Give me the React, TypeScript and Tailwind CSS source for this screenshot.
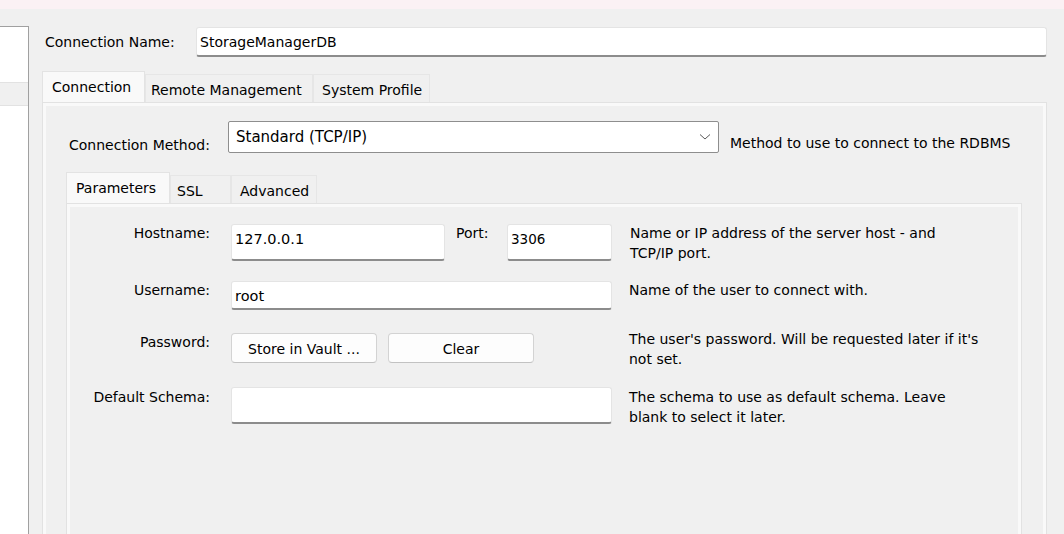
import React from "react";

function TextBox({ value, className = "", textClass = "" }: { value?: string; className?: string; textClass?: string }) {
  return (
    <div
      className={`bg-white border border-[#e4e4e4] border-b-2 border-b-[#8c8c8c] rounded-[3px] pl-[3px] ${className}`}
    >
      <span className={textClass}>{value}</span>
    </div>
  );
}

function Tab({ label, active, className = "" }: { label: string; active?: boolean; className?: string }) {
  return (
    <div
      className={
        active
          ? `h-[31px] bg-[#f9f9f9] border border-b-0 border-[#e3e3e3] flex items-center ${className}`
          : `h-[28px] bg-[#f0f0f0] border border-b-0 border-[#e6e6e6] flex items-center ${className}`
      }
    >
      {label}
    </div>
  );
}

export default function App() {
  return (
    <div className="w-[1064px] h-[534px] overflow-hidden bg-[#f0f0f0] flex flex-col font-['DejaVu_Sans',sans-serif] text-[14px] leading-[20px] text-black">
      <div className="h-[9px] shrink-0 bg-[#fbf1f4]" />

      <div className="flex h-[540px] shrink-0 mt-[17px]">
        {/* connection list (cut off) */}
        <div className="w-[29px] shrink-0 bg-white border-t border-r border-[#a0a0a0] flex flex-col">
          <div className="h-[55px]" />
          <div className="h-[24px] bg-[#f0f0f0] border-y border-[#e2e2e2]" />
        </div>

        <div className="ml-[13px] w-[1005px] flex flex-col">
          {/* name row */}
          <div className="flex items-center mt-[1px] h-[30px]">
            <div className="w-[154px] pl-[3px]">Connection Name:</div>
            <TextBox value="StorageManagerDB" className="flex-1 h-[30px] flex items-center" />
          </div>

          {/* outer tabs */}
          <div className="flex items-end mt-[14px]">
            <Tab label="Connection" active className="w-[103px] pl-[9px]" />
            <Tab label="Remote Management" className="w-[168px] pl-[5px] pt-[2px]" />
            <Tab label="System Profile" className="w-[117px] pl-[8px] pt-[2px]" />
          </div>

          <div className="flex-1 border border-[#e2e2e2] bg-[#f9f9f9] p-[3px] pb-0 flex flex-col min-h-0">
            <div className="flex-1 bg-[#f0f0f0] flex flex-col pt-[15px] min-h-0">
              {/* connection method */}
              <div className="flex items-start h-[32px] ml-[23px]">
                <div className="w-[159px] mt-[14px]">Connection Method:</div>
                <div className="w-[491px] h-[32px] bg-white border border-[#8e8e8e] rounded-[2px] flex items-center justify-between pl-[7px] pr-[7px]">
                  <span className="text-[15px] -mt-[1px]">Standard (TCP/IP)</span>
                  <svg width="12" height="8" viewBox="0 0 12 8" className="-mt-[1px]">
                    <path d="M1 1.5 L6 6 L11 1.5" fill="none" stroke="#5a5a5a" strokeWidth="1" />
                  </svg>
                </div>
                <div className="ml-[11px] mt-[12px]">Method to use to connect to the RDBMS</div>
              </div>

              {/* inner tabs */}
              <div className="flex items-end mt-[19px] ml-[20px]">
                <Tab label="Parameters" active className="w-[104px] pl-[9px]" />
                <Tab label="SSL" className="w-[61px] pl-[6px] pt-[3px]" />
                <Tab label="Advanced" className="w-[86px] pl-[8px] pt-[2px]" />
              </div>

              <div className="flex-1 ml-[20px] mr-[21px] border border-[#e2e2e2] bg-[#f9f9f9] p-[3px] pb-0 flex flex-col min-h-0">
                <div className="flex-1 bg-[#f0f0f0] pt-[17px] flex flex-col">
                  {/* hostname */}
                  <div className="flex items-start h-[37px]">
                    <div className="w-[140px] text-right -mt-[1px]">Hostname:</div>
                    <TextBox value="127.0.0.1" textClass="text-[14.5px]" className="ml-[21px] w-[214px] h-[37px] pt-[4px]" />
                    <div className="ml-[11px] w-[51px] -mt-[1px]">Port:</div>
                    <TextBox value="3306" textClass="text-[13.5px]" className="w-[105px] h-[37px] pt-[4px]" />
                    <div className="ml-[18px] -mt-[1px]">
                      Name or IP address of the server host - and
                      <br />
                      TCP/IP port.
                    </div>
                  </div>

                  {/* username */}
                  <div className="flex items-start h-[29px] mt-[20px]">
                    <div className="w-[140px] text-right -mt-[1px]">Username:</div>
                    <TextBox value="root" textClass="text-[14.5px]" className="ml-[21px] w-[381px] h-[29px] flex items-center pt-[1px]" />
                    <div className="ml-[17px] -mt-[1px]">Name of the user to connect with.</div>
                  </div>

                  {/* password */}
                  <div className="flex items-start h-[30px] mt-[23px]">
                    <div className="w-[140px] text-right -mt-[1px]">Password:</div>
                    <div className="ml-[21px] w-[381px] flex gap-[11px]">
                      <button className="w-[146px] h-[30px] bg-[#fdfdfd] border border-[#d3d3d3] border-b-[#c2c2c2] rounded-[4px] pt-[1px]">
                        Store in Vault ...
                      </button>
                      <button className="w-[146px] h-[30px] bg-[#fdfdfd] border border-[#d3d3d3] border-b-[#c2c2c2] rounded-[4px] pt-[1px]">
                        Clear
                      </button>
                    </div>
                    <div className="ml-[17px] -mt-[4px]">
                      The user&apos;s password. Will be requested later if it&apos;s
                      <br />
                      not set.
                    </div>
                  </div>

                  {/* default schema */}
                  <div className="flex items-start h-[37px] mt-[24px]">
                    <div className="w-[140px] text-right">Default Schema:</div>
                    <TextBox className="ml-[21px] w-[381px] h-[37px]" />
                    <div className="ml-[17px]">
                      The schema to use as default schema. Leave
                      <br />
                      blank to select it later.
                    </div>
                  </div>
                </div>
              </div>
            </div>
          </div>
        </div>
      </div>
    </div>
  );
}
